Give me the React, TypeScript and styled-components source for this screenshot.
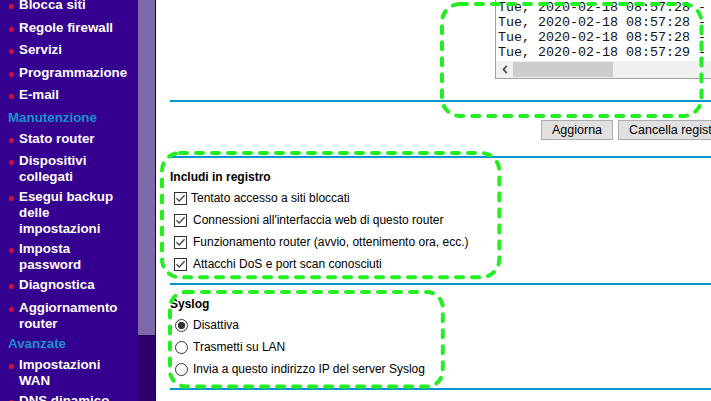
import React from 'react';
import styled, { createGlobalStyle } from 'styled-components';

const GlobalStyle = createGlobalStyle`
    html, body {
        margin: 0;
        padding: 0;
        overflow: hidden;
        background: #ffffff;
    }
    body {
        font-family: 'Liberation Sans', Arial, sans-serif;
        color: #000000;
    }
`;

type MenuEntry = { label: string; heading?: boolean };

const menu: MenuEntry[] = [
    { label: 'Blocca siti' },
    { label: 'Regole firewall' },
    { label: 'Servizi' },
    { label: 'Programmazione' },
    { label: 'E-mail' },
    { label: 'Manutenzione', heading: true },
    { label: 'Stato router' },
    { label: 'Dispositivi collegati' },
    { label: 'Esegui backup delle impostazioni' },
    { label: 'Imposta password' },
    { label: 'Diagnostica' },
    { label: 'Aggiornamento router' },
    { label: 'Avanzate', heading: true },
    { label: 'Impostazioni WAN' },
    { label: 'DNS dinamico' },
];

const logLines = [
    'Tue, 2020-02-18 08:57:27 - [Accesso amministratore] da sorgente 192.168.1.2',
    'Tue, 2020-02-18 08:57:28 - [Accesso amministratore] da sorgente 192.168.1.2',
    'Tue, 2020-02-18 08:57:28 - [Accesso amministratore] da sorgente 192.168.1.2',
    'Tue, 2020-02-18 08:57:28 - [Accesso amministratore] da sorgente 192.168.1.2',
    'Tue, 2020-02-18 08:57:29 - [Accesso amministratore] da sorgente 192.168.1.2',
];

const logOptions = [
    { label: 'Tentato accesso a siti bloccati', tight: true },
    { label: "Connessioni all'interfaccia web di questo router" },
    { label: 'Funzionamento router (avvio, ottenimento ora, ecc.)' },
    { label: 'Attacchi DoS e port scan conosciuti' },
];

const syslogOptions = [
    { label: 'Disattiva', checked: true },
    { label: 'Trasmetti su LAN' },
    { label: 'Invia a questo indirizzo IP del server Syslog' },
];

// cornici tratteggiate verdi sopra lo screenshot
const frames = [
    { left: 441.5, top: 3.8, width: 259.5, height: 112, radius: 18 },
    { left: 161.7, top: 152.5, width: 337.3, height: 124.3, radius: 18 },
    { left: 170, top: 291.7, width: 272.8, height: 94.5, radius: 16 },
];

const CheckIcon = () => (
    <svg width="11" height="11" viewBox="0 0 11 11">
        <path d="M1.5 5.2 L4.2 8 L9.6 2.2" fill="none" stroke="#444444" strokeWidth="1.3" />
    </svg>
);

const ChevronLeft = () => (
    <svg width="6" height="9" viewBox="0 0 6 9">
        <path d="M4.8 0.8 L1.5 4.5 L4.8 8.2" fill="none" stroke="#505050" strokeWidth="1.8" />
    </svg>
);

const App = () => {
    return (
        <>
            <GlobalStyle />
            <Page>
                <Sidebar>
                    <MenuList>
                        {menu.map((item) =>
                            item.heading ? (
                                <MenuHeading key={item.label}>{item.label}</MenuHeading>
                            ) : (
                                <MenuItem key={item.label}>
                                    <Bullet />
                                    <MenuText>{item.label}</MenuText>
                                </MenuItem>
                            ),
                        )}
                    </MenuList>
                </Sidebar>
                <ScrollTrack>
                    <ScrollThumb />
                </ScrollTrack>
                <Main>
                    <LogBox>
                        <LogText>
                            {logLines.map((line, i) => (
                                <LogLine key={i}>{line}</LogLine>
                            ))}
                        </LogText>
                        <HScroll>
                            <HArrow>
                                <ChevronLeft />
                            </HArrow>
                            <HThumb />
                        </HScroll>
                    </LogBox>
                    <Divider $top={21} />
                    <ButtonRow>
                        <Button>Aggiorna</Button>
                        <Button>Cancella registro</Button>
                        <Button>Invia registro</Button>
                    </ButtonRow>
                    <Divider $top={16} />
                    <SectionTitle>Includi in registro</SectionTitle>
                    <OptionList>
                        {logOptions.map((opt) => (
                            <OptionRow key={opt.label}>
                                <CheckBox>
                                    <CheckIcon />
                                </CheckBox>
                                <OptionLabel $gap={opt.tight ? 4 : 6}>{opt.label}</OptionLabel>
                            </OptionRow>
                        ))}
                    </OptionList>
                    <Divider $top={8} />
                    <SectionTitle>Syslog</SectionTitle>
                    <OptionList>
                        {syslogOptions.map((opt) => (
                            <OptionRow key={opt.label}>
                                <Radio $checked={!!opt.checked} />
                                <OptionLabel $gap={5}>{opt.label}</OptionLabel>
                            </OptionRow>
                        ))}
                    </OptionList>
                    <Divider $top={8} />
                </Main>
                {frames.map((f, i) => (
                    <Frame key={i} $left={f.left} $top={f.top} width={f.width} height={f.height}>
                        <rect
                            x="0"
                            y="0"
                            width={f.width}
                            height={f.height}
                            rx={f.radius}
                            fill="none"
                            stroke="#22ee22"
                            strokeWidth="4"
                            strokeDasharray="7 9"
                            strokeLinecap="round"
                        />
                    </Frame>
                ))}
            </Page>
        </>
    );
};

export default App;

const Page = styled.div`
    position: relative;
    display: flex;
    width: 711px;
    height: 401px;
    overflow: hidden;
`;

const Sidebar = styled.nav`
    width: 138px;
    flex-shrink: 0;
    background: #35008f;
    overflow: hidden;
`;

const MenuList = styled.ul`
    list-style: none;
    margin: -3px 0 0;
    padding: 0;
`;

const MenuItem = styled.li`
    box-sizing: border-box;
    display: flex;
    align-items: flex-start;
    min-height: 22.5px;
    padding-bottom: 4px;
    color: #ffffff;
    font-size: 13.33px;
    font-weight: bold;
    line-height: 16px;
`;

const Bullet = styled.span`
    flex-shrink: 0;
    width: 5px;
    height: 5px;
    margin: 7px 5px 0 9px;
    border-radius: 50%;
    background: #d0103a;
`;

const MenuText = styled.span`
    width: 112px;
`;

const MenuHeading = styled.li`
    padding-left: 8px;
    margin-bottom: 5px;
    color: #1b91d1;
    font-size: 13.33px;
    font-weight: bold;
    line-height: 16px;
`;

const ScrollTrack = styled.div`
    width: 17px;
    flex-shrink: 0;
    background: #2b006b;
    border-right: 1px solid #1e0050;
`;

const ScrollThumb = styled.div`
    height: 335px;
    background: #7e69a9;
`;

const Main = styled.main`
    width: 620px;
    flex-shrink: 0;
    padding-left: 14px;
`;

const LogBox = styled.div`
    margin: -20px 0 0 325px;
    width: 320px;
    border: 1px solid #a0a0a0;
    background: #ffffff;
`;

const LogText = styled.div`
    padding: 3.5px 0 1.5px 2px;
    overflow: hidden;
`;

const LogLine = styled.div`
    font-family: 'Liberation Mono', 'Courier New', monospace;
    font-size: 13.33px;
    line-height: 15px;
    white-space: pre;
    color: #111111;
`;

const HScroll = styled.div`
    display: flex;
    height: 17px;
    background: #f0f0f0;
`;

const HArrow = styled.div`
    width: 17px;
    display: flex;
    align-items: center;
    justify-content: center;
`;

const HThumb = styled.div`
    width: 100px;
    margin: 1px 0;
    background: #cdcdcd;
`;

const Divider = styled.div<{ $top: number }>`
    height: 2px;
    margin-top: ${({ $top }) => $top}px;
    background: #0096cf;
`;

const ButtonRow = styled.div`
    display: flex;
    gap: 5px;
    margin-top: 18px;
    padding-left: 371px;
`;

const Button = styled.button`
    flex-shrink: 0;
    height: 20px;
    padding: 0 10px;
    border: 1px solid #adadad;
    background: #e1e1e1;
    font-family: 'Liberation Sans', Arial, sans-serif;
    font-size: 12.5px;
    color: #000000;
    white-space: nowrap;
`;

const SectionTitle = styled.div`
    margin-top: 11px;
    font-size: 12px;
    font-weight: bold;
    line-height: 16px;
`;

const OptionList = styled.div`
    margin-top: 2px;
`;

const OptionRow = styled.div`
    display: flex;
    align-items: center;
    height: 22px;
    padding-left: 4px;
`;

const CheckBox = styled.span`
    box-sizing: border-box;
    width: 13px;
    height: 13px;
    display: flex;
    align-items: center;
    justify-content: center;
    border: 1px solid #333333;
    background: #ffffff;
`;

const Radio = styled.span<{ $checked: boolean }>`
    box-sizing: border-box;
    width: 13px;
    height: 13px;
    margin-left: 1px;
    border: 1px solid #333333;
    border-radius: 50%;
    background: ${({ $checked }) =>
        $checked ? 'radial-gradient(circle, #333333 0 3.4px, #ffffff 3.9px)' : '#ffffff'};
`;

const OptionLabel = styled.span<{ $gap: number }>`
    margin-left: ${({ $gap }) => $gap}px;
    font-size: 12px;
    line-height: 16px;
    white-space: nowrap;
`;

const Frame = styled.svg<{ $left: number; $top: number }>`
    position: absolute;
    left: ${({ $left }) => $left}px;
    top: ${({ $top }) => $top}px;
    overflow: visible;
    pointer-events: none;
`;
